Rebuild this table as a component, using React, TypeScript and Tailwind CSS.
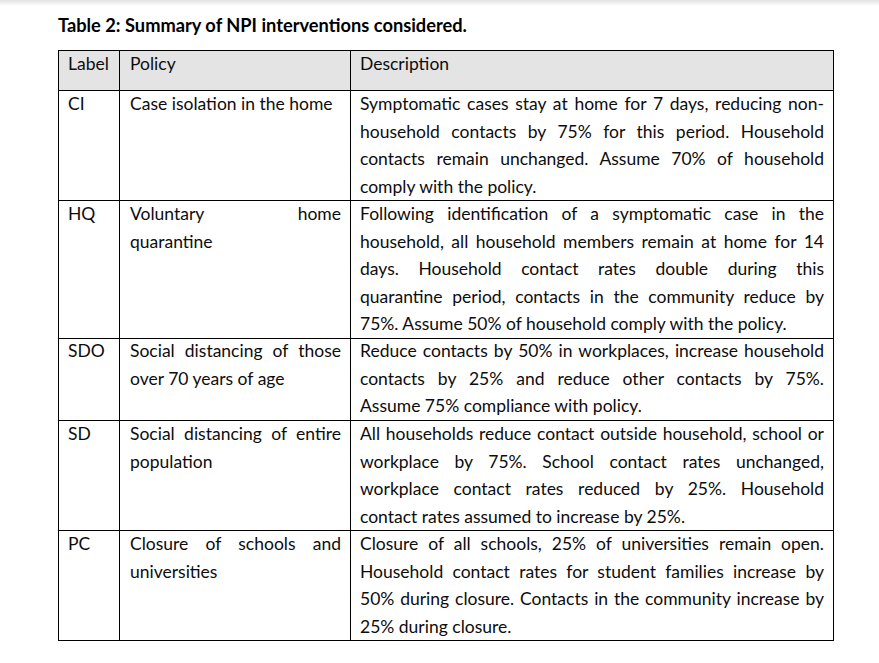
const rows = [
  {
    label: "CI",
    h: "h-[110px]",
    policy: [{ t: "Case isolation in the home", j: false }],
    desc: [
      { t: "Symptomatic cases stay at home for 7 days, reducing non-", j: true },
      { t: "household contacts by 75% for this period. Household", j: true },
      { t: "contacts remain unchanged. Assume 70% of household", j: true },
      { t: "comply with the policy.", j: false },
    ],
  },
  {
    label: "HQ",
    h: "h-[137px]",
    policy: [
      { t: "Voluntary home", j: true },
      { t: "quarantine", j: false },
    ],
    desc: [
      { t: "Following identification of a symptomatic case in the", j: true },
      { t: "household, all household members remain at home for 14", j: true },
      { t: "days. Household contact rates double during this", j: true },
      { t: "quarantine period, contacts in the community reduce by", j: true },
      { t: "75%. Assume 50% of household comply with the policy.", j: false },
    ],
  },
  {
    label: "SDO",
    h: "h-[83px]",
    policy: [
      { t: "Social distancing of those", j: true },
      { t: "over 70 years of age", j: false },
    ],
    desc: [
      { t: "Reduce contacts by 50% in workplaces, increase household", j: true },
      { t: "contacts by 25% and reduce other contacts by 75%.", j: true },
      { t: "Assume 75% compliance with policy.", j: false },
    ],
  },
  {
    label: "SD",
    h: "h-[110px]",
    policy: [
      { t: "Social distancing of entire", j: true },
      { t: "population", j: false },
    ],
    desc: [
      { t: "All households reduce contact outside household, school or", j: true },
      { t: "workplace by 75%. School contact rates unchanged,", j: true },
      { t: "workplace contact rates reduced by 25%. Household", j: true },
      { t: "contact rates assumed to increase by 25%.", j: false },
    ],
  },
  {
    label: "PC",
    h: "h-[110px]",
    policy: [
      { t: "Closure of schools and", j: true },
      { t: "universities", j: false },
    ],
    desc: [
      { t: "Closure of all schools, 25% of universities remain open.", j: true },
      { t: "Household contact rates for student families increase by", j: true },
      { t: "50% during closure. Contacts in the community increase by", j: true },
      { t: "25% during closure.", j: false },
    ],
  },
];

function Lines({ lines }: { lines: { t: string; j: boolean }[] }) {
  return (
    <div className="-mt-[1px]">
      {lines.map((l, i) => (
        <div
          key={i}
          className={`h-[27.5px] leading-[27.5px] whitespace-nowrap ${
            l.j ? "text-justify [text-align-last:justify]" : ""
          }`}
        >
          {l.t}
        </div>
      ))}
    </div>
  );
}

export default function App() {
  return (
    <div className="w-[879px] h-[663px] bg-white text-[#0d0d0d] font-['Lato',sans-serif] overflow-hidden">
      {/* top shadow band */}
      <div className="h-[6px] bg-gradient-to-b from-[#e2e2e2] to-white" />

      <div className="px-[58px]">
        <h1 className="mt-[8px] text-[18.25px] leading-[22px] font-bold text-black">
          Table 2: Summary of NPI interventions considered.
        </h1>

        {/* table */}
        <div className="mt-[14px] w-[776px] border-l border-t border-black text-[17.5px]">
          <div className="grid grid-cols-[61px_231px_483px] h-[40px] bg-[#e4e4e4]">
            <div className="border-r border-b border-black pl-[9px] leading-[26px]">Label</div>
            <div className="border-r border-b border-black pl-[10px] leading-[26px]">Policy</div>
            <div className="border-r border-b border-black pl-[9px] leading-[26px]">Description</div>
          </div>

          {rows.map((r) => (
            <div key={r.label} className={`grid grid-cols-[61px_231px_483px] ${r.h}`}>
              <div className="border-r border-b border-black pl-[9px] leading-[26px]">{r.label}</div>
              <div className="border-r border-b border-black pl-[10px] pr-[9px]">
                <Lines lines={r.policy} />
              </div>
              <div className="border-r border-b border-black pl-[9px] pr-[9px]">
                <Lines lines={r.desc} />
              </div>
            </div>
          ))}
        </div>
      </div>
    </div>
  );
}
